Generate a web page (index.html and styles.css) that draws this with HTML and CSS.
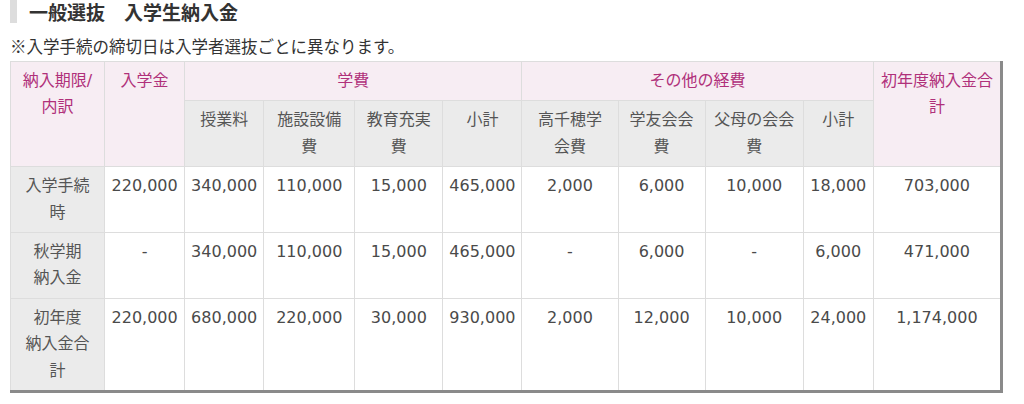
FILE: index.html
```html
<!DOCTYPE html>
<html lang="ja">
<head>
<meta charset="utf-8">
<link rel="stylesheet" href="styles.css">
</head>
<body>
<h2 class="title">一般選抜　入学生納入金</h2>
<p class="note">※入学手続の締切日は入学者選抜ごとに異なります。</p>
<table class="fees">
  <colgroup>
    <col class="w94"><col class="w80"><col class="w79"><col class="w91"><col class="w88"><col class="w79"><col class="w96"><col class="w87"><col class="w98"><col class="w70"><col class="w128">
  </colgroup>
  <thead>
    <tr>
      <th class="pk" rowspan="2">納入期限/<br>内訳</th>
      <th class="pk" rowspan="2">入学金</th>
      <th class="pk" colspan="4">学費</th>
      <th class="pk" colspan="4">その他の経費</th>
      <th class="pk" rowspan="2">初年度納入金合<br>計</th>
    </tr>
    <tr>
      <th class="gy">授業料</th>
      <th class="gy">施設設備<br>費</th>
      <th class="gy">教育充実<br>費</th>
      <th class="gy">小計</th>
      <th class="gy">高千穂学<br>会費</th>
      <th class="gy">学友会会<br>費</th>
      <th class="gy">父母の会会<br>費</th>
      <th class="gy">小計</th>
    </tr>
  </thead>
  <tbody>
    <tr>
      <th class="gy">入学手続<br>時</th>
      <td>220,000</td><td>340,000</td><td>110,000</td><td>15,000</td><td>465,000</td>
      <td>2,000</td><td>6,000</td><td>10,000</td><td>18,000</td><td>703,000</td>
    </tr>
    <tr>
      <th class="gy">秋学期<br>納入金</th>
      <td>-</td><td>340,000</td><td>110,000</td><td>15,000</td><td>465,000</td>
      <td>-</td><td>6,000</td><td>-</td><td>6,000</td><td>471,000</td>
    </tr>
    <tr>
      <th class="gy">初年度<br>納入金合<br>計</th>
      <td>220,000</td><td>680,000</td><td>220,000</td><td>30,000</td><td>930,000</td>
      <td>2,000</td><td>12,000</td><td>10,000</td><td>24,000</td><td>1,174,000</td>
    </tr>
  </tbody>
</table>
</body>
</html>
```

FILE: styles.css
```css
html, body {
  margin: 0;
  padding: 0;
  background: #ffffff;
}
body {
  padding-left: 10px;
  font-family: "DejaVu Sans", "Noto Sans CJK JP", sans-serif;
  color: #444;
  font-size: 16px;
}
.title {
  margin: 0;
  height: 23px;
  line-height: 24px;
  border-left: 7px solid #dddddd;
  padding-left: 12px;
  font-size: 19px;
  font-weight: bold;
  color: #333;
  font-family: "Noto Sans CJK JP", sans-serif;
}
.note {
  margin: 10px 0 0 0;
  height: 28px;
  line-height: 27px;
  font-size: 16.5px;
  color: #333;
  font-family: "Noto Sans CJK JP", sans-serif;
}
.fees {
  border-collapse: collapse;
  table-layout: fixed;
  width: 993px;
  border-right: 3px solid #8a8a8a;
  border-bottom: 3px solid #8a8a8a;
}
.w94 { width: 94px; }
.w80 { width: 80px; }
.w79 { width: 79px; }
.w91 { width: 91px; }
.w88 { width: 88px; }
.w96 { width: 96px; }
.w87 { width: 87px; }
.w98 { width: 98px; }
.w70 { width: 70px; }
.w128 { width: 128px; }
.fees th, .fees td {
  border: 1px solid #dddddd;
  padding: 6px 2px 6px;
  line-height: 26.4px;
  text-align: center;
  vertical-align: top;
  font-weight: normal;
  white-space: nowrap;
}
.fees td {
  background: #ffffff;
  color: #4a4a4a;
}
.fees .pk {
  background: #f7edf3;
  color: #b0307a;
}
.fees .gy {
  background: #ebebeb;
  color: #555;
}
```
